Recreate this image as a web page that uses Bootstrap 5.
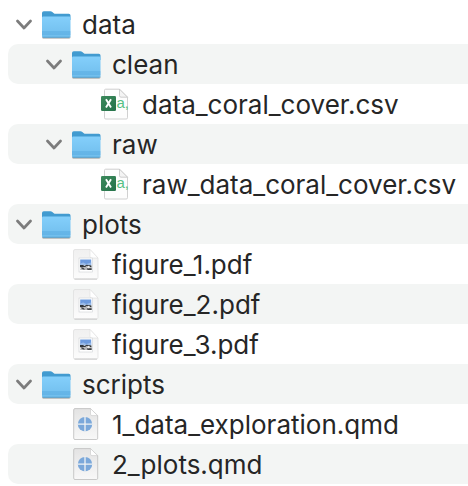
<!DOCTYPE html>
<html lang="en">
<head>
<meta charset="utf-8">
<meta name="viewport" content="width=device-width, initial-scale=1">
<title>Project files</title>
<link href="https://cdn.jsdelivr.net/npm/bootstrap@5.3.0/dist/css/bootstrap.min.css" rel="stylesheet">
<style>
  body { background: #fff; color: #262626; font-family: Inter, "Liberation Sans", sans-serif; font-size: 26px; line-height: 32px; overflow-x: hidden; }
  .tree { padding: 4px 0 0 8px; }
  .tree-row { height: 40px; padding-left: 8px; border-radius: 10px 0 0 10px; white-space: nowrap; }
  .tree-row:nth-child(even) { background: #f3f5f4; }
  .level-1 { padding-left: 38px; }
  .level-2 { padding-left: 68px; }
  .twist { width: 25px; height: 32px; color: #7c7c7c; }
  .twist svg { width: 16px; height: 16px; display: block; }
  .glyph { width: 30px; height: 36px; margin-right: 11px; }
  .file-name { padding-top: 2px; }
</style>
</head>
<body>
<svg width="0" height="0" class="position-absolute" aria-hidden="true">
  <defs>
    <linearGradient id="gFolder" x1="0" y1="0" x2="0" y2="1"><stop offset="0" stop-color="#84cffb"/><stop offset="1" stop-color="#6fbdec"/></linearGradient>
    <linearGradient id="gPage" x1="0" y1="0" x2="0" y2="1"><stop offset="0" stop-color="#f0f0f0"/><stop offset="1" stop-color="#fcfcfc"/></linearGradient>
    <linearGradient id="gQmd" x1="0" y1="0" x2="0" y2="1"><stop offset="0" stop-color="#e3e3e3"/><stop offset="1" stop-color="#f8f8f8"/></linearGradient>
    <linearGradient id="gExcel" x1="0" y1="0" x2="1" y2="1"><stop offset="0" stop-color="#3c8a5c"/><stop offset="1" stop-color="#26734a"/></linearGradient>
  </defs>
  <symbol id="chevron" viewBox="0 0 16 16"><path d="M1.500 5 8 12l6.500-7" fill="none" stroke="currentColor" stroke-width="2.700" stroke-linecap="round" stroke-linejoin="round"/></symbol>
  <symbol id="folder" viewBox="0 0 30 36">
    <path d="M1 30.500h28.500v.8q0 1.400-1.300 1.400H2.300Q1 32.700 1 31.300z" fill="#000" opacity=".28"/>
    <path d="M1 7q0-1.800 1.800-1.800h6.700q1 0 1.800.7l1.500 1.300q.7.600 1.700.600h13.300q1.700 0 1.700 1.700V14H1z" fill="#429bd0"/>
    <path d="M1 11.800q0-1.300 1.300-1.300h25.900q1.300 0 1.300 1.300v18.500q0 1.300-1.300 1.300H2.300Q1 31.600 1 30.300z" fill="url(#gFolder)"/>
    <path d="M1 26h28.500M1 28h28.500" stroke="#4ba2da" stroke-width=".7"/>
    <path d="M2 31.300h26.500" stroke="#4596c9" stroke-width=".7"/>
  </symbol>
  <symbol id="pdf" viewBox="0 0 30 36">
    <path d="M4 3.500h15l8 8.500v19.500q0 1.500-1.500 1.500H4q-1.500 0-1.500-1.500V5Q2.500 3.500 4 3.500z" fill="url(#gPage)" stroke="#dcdcdc" stroke-width=".7"/>
    <path d="M3.500 33.100h22.500" stroke="#b8b8b8" stroke-width=".7"/>
    <path d="M19 3.500v6.800q0 1.700 1.700 1.700H27z" fill="#fff" stroke="#dedede" stroke-width=".6"/>
    <rect x="8" y="12" width="13.500" height="14" fill="#fff" stroke="#c6c9ce" stroke-width=".5"/>
    <rect x="9.200" y="13.500" width="11" height="5.500" fill="#6d9bdf"/>
    <path d="M9.200 17.500l3-1 3 1.500 5-1.500v3h-11z" fill="#9abbe8"/>
    <path d="M9 19h3l1.500 1 2-1.300 5 .8v1.800H9z" fill="#33373b"/>
    <path d="M10 21.200h4l1.500-1.500 1.500 1.500h4v2.800H9z" fill="#b5b7ba"/>
    <path d="M9.500 21.500h2.500l2 2h-2M16 22.300h4.500v1.700h-4z" fill="#404346"/>
    <circle cx="17.500" cy="21" r="1.300" fill="#eee"/>
  </symbol>
  <symbol id="qmd" viewBox="0 0 30 36">
    <path d="M4 2.600h15.500l7.200 7v22.600q0 1.300-1.300 1.300H4q-1.300 0-1.300-1.300V3.900q0-1.300 1.300-1.300z" fill="url(#gQmd)" stroke="#bdbdbd" stroke-width=".8"/>
    <path d="M19.500 2.600v5.500q0 1.500 1.500 1.500h5.700z" fill="#fff" stroke="#c8c8c8" stroke-width=".6"/>
    <circle cx="14" cy="18.200" r="7.200" fill="#7ba8da"/>
    <path d="M14 10.500v15.400M6.300 18.200h15.400" stroke="#f1f3f5" stroke-width="1.300"/>
  </symbol>
</svg>
<svg class="d-none" aria-hidden="true">
  <symbol id="csv" viewBox="0 0 30 36">
    <path d="M4.500 3.200h14l8 8v20.500q0 1.300-1.300 1.300H4.800q-1.300 0-1.300-1.300V4.500q0-1.300 1-1.300z" fill="#fdfdfd" stroke="#c4c4c4" stroke-width=".8"/>
    <path d="M18.500 3.200v6.500q0 1.500 1.500 1.500h6.500z" fill="#f4f4f4" stroke="#c4c4c4" stroke-width=".8"/>
    <rect x="0" y="10" width="15" height="15" rx="1.300" fill="url(#gExcel)"/>
    <path d="M5 13.300 10 21.500M10 13.300 5 21.500" stroke="#fff" stroke-width="1.900"/>
    <text x="15.500" y="22" font-family="Liberation Sans, sans-serif" font-size="15" fill="#56c184">a,</text>
  </symbol>
</svg>
<main>
  <ul class="tree list-unstyled mb-0">
    <li class="tree-row d-flex align-items-center"><button type="button" class="twist btn p-0 border-0 rounded-0" aria-label="Collapse data"><svg><use href="#chevron"/></svg></button><svg class="glyph flex-shrink-0"><use href="#folder"/></svg><span class="file-name">data</span></li>
    <li class="tree-row level-1 d-flex align-items-center"><button type="button" class="twist btn p-0 border-0 rounded-0" aria-label="Collapse clean"><svg><use href="#chevron"/></svg></button><svg class="glyph flex-shrink-0"><use href="#folder"/></svg><span class="file-name">clean</span></li>
    <li class="tree-row level-2 d-flex align-items-center"><span class="twist flex-shrink-0"></span><svg class="glyph flex-shrink-0"><use href="#csv"/></svg><span class="file-name">data_coral_cover.csv</span></li>
    <li class="tree-row level-1 d-flex align-items-center"><button type="button" class="twist btn p-0 border-0 rounded-0" aria-label="Collapse raw"><svg><use href="#chevron"/></svg></button><svg class="glyph flex-shrink-0"><use href="#folder"/></svg><span class="file-name">raw</span></li>
    <li class="tree-row level-2 d-flex align-items-center"><span class="twist flex-shrink-0"></span><svg class="glyph flex-shrink-0"><use href="#csv"/></svg><span class="file-name">raw_data_coral_cover.csv</span></li>
    <li class="tree-row d-flex align-items-center"><button type="button" class="twist btn p-0 border-0 rounded-0" aria-label="Collapse plots"><svg><use href="#chevron"/></svg></button><svg class="glyph flex-shrink-0"><use href="#folder"/></svg><span class="file-name">plots</span></li>
    <li class="tree-row level-1 d-flex align-items-center"><span class="twist flex-shrink-0"></span><svg class="glyph flex-shrink-0"><use href="#pdf"/></svg><span class="file-name">figure_1.pdf</span></li>
    <li class="tree-row level-1 d-flex align-items-center"><span class="twist flex-shrink-0"></span><svg class="glyph flex-shrink-0"><use href="#pdf"/></svg><span class="file-name">figure_2.pdf</span></li>
    <li class="tree-row level-1 d-flex align-items-center"><span class="twist flex-shrink-0"></span><svg class="glyph flex-shrink-0"><use href="#pdf"/></svg><span class="file-name">figure_3.pdf</span></li>
    <li class="tree-row d-flex align-items-center"><button type="button" class="twist btn p-0 border-0 rounded-0" aria-label="Collapse scripts"><svg><use href="#chevron"/></svg></button><svg class="glyph flex-shrink-0"><use href="#folder"/></svg><span class="file-name">scripts</span></li>
    <li class="tree-row level-1 d-flex align-items-center"><span class="twist flex-shrink-0"></span><svg class="glyph flex-shrink-0"><use href="#qmd"/></svg><span class="file-name">1_data_exploration.qmd</span></li>
    <li class="tree-row level-1 d-flex align-items-center"><span class="twist flex-shrink-0"></span><svg class="glyph flex-shrink-0"><use href="#qmd"/></svg><span class="file-name">2_plots.qmd</span></li>
  </ul>
</main>
<script src="https://cdn.jsdelivr.net/npm/bootstrap@5.3.0/dist/js/bootstrap.bundle.min.js"></script>
</body>
</html>
